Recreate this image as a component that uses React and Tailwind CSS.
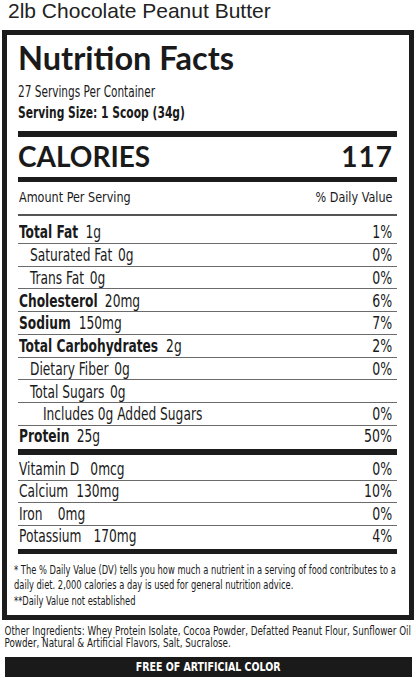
import React from "react";

// rows in the main nutrient list
const nutrients = [
  { name: "Total Fat", bold: true, val: "1g", dv: "1%", h: "h-[28px]", pad: "pl-[1px]", gap: "ml-[9px]" },
  { name: "Saturated Fat", val: "0g", dv: "0%", h: "h-[22.75px]", pad: "pl-[12px]", gap: "ml-[7px]" },
  { name: "Trans Fat", val: "0g", dv: "0%", h: "h-[22.75px]", pad: "pl-[12px]", gap: "ml-[7px]" },
  { name: "Cholesterol", bold: true, val: "20mg", dv: "6%", h: "h-[22.75px]", pad: "pl-[1px]", gap: "ml-[9px]" },
  { name: "Sodium", bold: true, val: "150mg", dv: "7%", h: "h-[22.75px]", pad: "pl-[1px]", gap: "ml-[10px]" },
  { name: "Total Carbohydrates", bold: true, val: "2g", dv: "2%", h: "h-[22.75px]", pad: "pl-[1px]", gap: "ml-[10px]" },
  { name: "Dietary Fiber", val: "0g", dv: "0%", h: "h-[22.75px]", pad: "pl-[12px]", gap: "ml-[7px]" },
  { name: "Total Sugars", val: "0g", dv: "", h: "h-[22.75px]", pad: "pl-[12px]", gap: "ml-[7px]" },
  { name: "Includes 0g Added Sugars", val: "", dv: "0%", h: "h-[22.75px]", pad: "pl-[25px]", gap: "ml-0" },
];

const vitamins = [
  { name: "Vitamin D", val: "0mcg", dv: "0%", h: "h-[26px]", gap: "ml-[14px]", line: true },
  { name: "Calcium", val: "130mg", dv: "10%", h: "h-[22px]", gap: "ml-[10px]", line: true },
  { name: "Iron", val: "0mg", dv: "0%", h: "h-[23px]", gap: "ml-[19px]", line: true },
  { name: "Potassium", val: "170mg", dv: "4%", h: "h-[23px]", gap: "ml-[15px]", line: false },
];

const Row = ({ item, last }) => (
  <div
    className={`${item.h} flex items-end justify-between pr-[5px] ${
      last ? "pb-[3.5px]" : "border-b border-[#6b6b6b] pb-[1.5px]"
    } ${item.pad || "pl-[1px]"}`}
  >
    <div className="leading-[17px] text-[17px] whitespace-nowrap origin-left scale-x-[0.8]">
      <span className={item.bold ? "font-bold" : ""}>{item.name}</span>
      {item.val && <span className={item.gap}>{item.val}</span>}
    </div>
    <div className="leading-[17px] text-[17px] origin-right scale-x-[0.82]">{item.dv}</div>
  </div>
);

export default function App() {
  return (
    <div className="w-[416px] h-[678px] overflow-hidden bg-white text-[#1a1a1a] font-['DejaVu_Sans_Condensed','DejaVu_Sans',sans-serif]">
      {/* product title */}
      <div className="h-[30px] pl-[8px] text-[21px] leading-[22px] text-[#222] font-['Liberation_Sans',Arial,sans-serif]">
        2lb Chocolate Peanut Butter
      </div>

      {/* label box */}
      <div className="ml-[1.5px] w-[412px] h-[590px] border-[5px] border-[#1c1c1c] px-[11.5px] overflow-hidden">
        <div className="pt-[4.6px] leading-[36px] text-[32.5px] font-bold font-['Lato',sans-serif]">
          Nutrition Facts
        </div>
        <div className="mt-[6.7px] text-[15px] leading-[21px] whitespace-nowrap origin-left scale-x-[0.78]">
          27 Servings Per Container
        </div>
        <div className="text-[15.5px] leading-[21px] font-bold whitespace-nowrap origin-left scale-x-[0.77]">
          Serving Size: 1 Scoop (34g)
        </div>

        <div className="mt-[7px] h-[6px] bg-[#1c1c1c]" />
        <div className="pt-[3px] flex justify-between items-center leading-[32px] text-[28px] font-bold font-['Lato',sans-serif] pr-[4px]">
          <span>CALORIES</span>
          <span className="tracking-[1px]">117</span>
        </div>
        <div className="mt-[4.5px] h-[5px] bg-[#1c1c1c]" />

        <div className="pt-[5px] pb-[7px] pl-[1px] pr-[5px] flex justify-between text-[14.5px] leading-[20px] border-b-2 border-[#555]">
          <span className="origin-left scale-x-[0.86] whitespace-nowrap">Amount Per Serving</span>
          <span className="origin-right scale-x-[0.86] whitespace-nowrap">% Daily Value</span>
        </div>

        {nutrients.map((n) => (
          <Row key={n.name} item={n} />
        ))}
        <Row
          item={{ name: "Protein", bold: true, val: "25g", dv: "50%", h: "h-[23px]", gap: "ml-[9px]" }}
          last
        />
        <div className="h-[6px] bg-[#1c1c1c]" />

        {vitamins.map((v) => (
          <Row key={v.name} item={v} last={!v.line} />
        ))}
        <div className="h-[5px] bg-[#1c1c1c]" />

        <div className="mt-[8.5px] -ml-[4px] text-[12.5px] leading-[15px] whitespace-nowrap origin-left scale-x-[0.74]">
          <div>* The % Daily Value (DV) tells you how much a nutrient in a serving of food contributes to a</div>
          <div>daily diet. 2,000 calories a day is used for general nutrition advice.</div>
          <div className="mt-[1px]">**Daily Value not established</div>
        </div>
      </div>

      {/* ingredients */}
      <div className="mt-[5px] pl-[6px] text-[13px] leading-[12px] whitespace-nowrap origin-left scale-x-[0.75]">
        <div>Other Ingredients: Whey Protein Isolate, Cocoa Powder, Defatted Peanut Flour, Sunflower Oil</div>
        <div>Powder, Natural &amp; Artificial Flavors, Salt, Sucralose.</div>
      </div>

      <div className="mt-[8px] ml-[5px] w-[407px] h-[20px] bg-[#1a1a1a] text-white text-center font-bold text-[12.5px] leading-[20px]">
        <span className="inline-block scale-x-[0.84]">FREE OF ARTIFICIAL COLOR</span>
      </div>
    </div>
  );
}
